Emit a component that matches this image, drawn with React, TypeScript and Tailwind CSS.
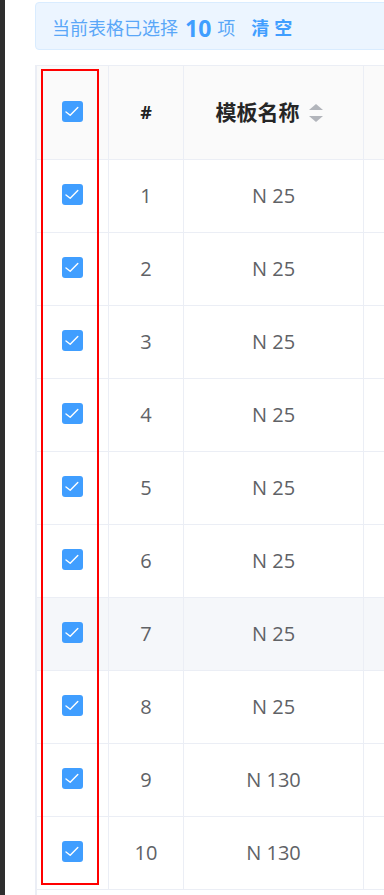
const rows = [
  { no: 1, name: "N 25" },
  { no: 2, name: "N 25" },
  { no: 3, name: "N 25" },
  { no: 4, name: "N 25" },
  { no: 5, name: "N 25" },
  { no: 6, name: "N 25" },
  { no: 7, name: "N 25", hover: true },
  { no: 8, name: "N 25" },
  { no: 9, name: "N 130" },
  { no: 10, name: "N 130" },
];

function Checkbox() {
  return (
    <span className="flex h-[21px] w-[21px] items-center justify-center rounded-[3px] bg-[#409eff]">
      <svg width="21" height="21" viewBox="0 0 21 21" fill="none">
        <path d="M4 11 L8.2 14.2 L15.8 6.5" stroke="#fff" strokeWidth="1.4" strokeLinecap="round" strokeLinejoin="round" />
      </svg>
    </span>
  );
}

function SortCaret() {
  return (
    <span className="ml-[2px] flex h-[34px] w-[34px] flex-col items-center justify-center gap-[6px] pr-[6px]">
      <span className="h-0 w-0 border-x-[7px] border-b-[6px] border-x-transparent border-b-[#b2b5bb]"></span>
      <span className="h-0 w-0 border-x-[7px] border-t-[6px] border-x-transparent border-t-[#b2b5bb]"></span>
    </span>
  );
}

export default function App() {
  return (
    <div
      className="flex h-[895px] w-[384px] overflow-hidden bg-white"
      style={{ fontFamily: '"Open Sans", "Noto Sans CJK SC", sans-serif' }}
    >
      <div className="w-[5px] shrink-0 bg-[#2e2e2e]"></div>

      <div className="relative flex min-w-0 flex-1 flex-col pl-[30px] pt-[2px]">
        {/* selection alert */}
        <div className="flex h-[48px] w-[420px] shrink-0 items-center rounded-[4px] border border-[#d9ecff] bg-[#ecf5ff] pl-[16px] pt-[4px] text-[#5aa7f8]">
          <span className="text-[18px]">当前表格已选择</span>
          <span className="ml-[7px] text-[23px] font-bold text-[#409eff]">10</span>
          <span className="ml-[6px] text-[18px]">项</span>
          <span className="ml-[16px] text-[18px] font-bold tracking-[5px] text-[#409eff]">清空</span>
        </div>

        {/* table */}
        <div className="mt-[15px] flex w-[420px] flex-1 flex-col border-l-2 border-t border-[#ebeef5]">
          <div className="flex h-[94px] shrink-0 border-b border-[#ebeef5] bg-[#fafafa]">
            <div className="flex w-[72px] items-center justify-center border-r border-[#ebeef5] pb-[2px]">
              <Checkbox />
            </div>
            <div className="flex w-[75px] items-center justify-center border-r border-[#ebeef5] text-[18px] font-bold text-[#222]">
              #
            </div>
            <div className="flex w-[180px] items-center justify-center border-r border-[#ebeef5] pl-[4px] text-[21px] font-bold text-[#262626]">
              <span>模板名称</span>
              <SortCaret />
            </div>
            <div className="flex-1"></div>
          </div>

          {rows.map((r) => (
            <div
              key={r.no}
              className={`flex h-[73px] shrink-0 border-b border-[#ebeef5] text-[20px] text-[#606266] ${
                r.hover ? "bg-[#f5f7fa]" : "bg-white"
              }`}
            >
              <div className="flex w-[72px] items-center justify-center border-r border-[#ebeef5] pb-[4px]">
                <Checkbox />
              </div>
              <div className="flex w-[75px] items-center justify-center border-r border-[#ebeef5]">{r.no}</div>
              <div className="flex w-[180px] items-center justify-center border-r border-[#ebeef5]">{r.name}</div>
              <div className="flex-1"></div>
            </div>
          ))}
        </div>

        {/* red highlight box around the selection column */}
        <div className="pointer-events-none absolute left-[36px] top-[69px] h-[816px] w-[58px] border-2 border-[#ff0000]"></div>
      </div>
    </div>
  );
}
